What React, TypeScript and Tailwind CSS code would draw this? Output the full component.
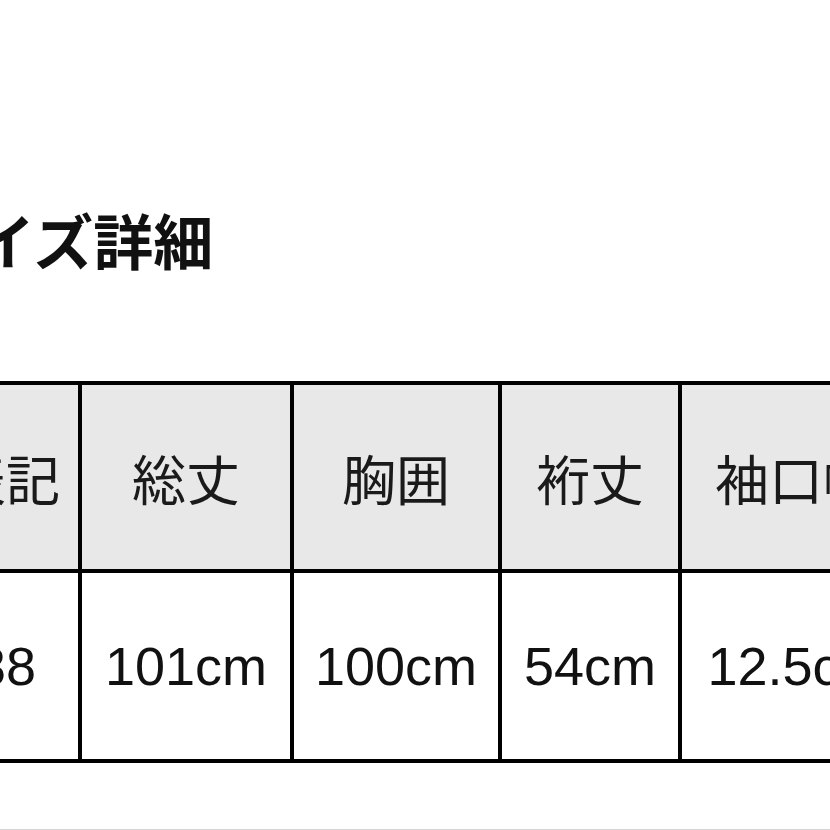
const headers = ['表記', '総丈', '胸囲', '裄丈', '袖口幅'];
const values = ['38', '101cm', '100cm', '54cm', '12.5cm'];
const widths = ['w-[152px]', 'w-[212px]', 'w-[208px]', 'w-[180px]', 'w-[232px]'];

const jp = { fontFamily: '"Noto Sans CJK JP", "Noto Sans", sans-serif' };
const latin = { fontFamily: '"Liberation Sans", Arial, sans-serif' };

export default function App() {
  return (
    <div className="w-[830px] h-[830px] overflow-hidden bg-white flex flex-col">
      <h1
        className="mt-[209px] -ml-[85px] text-[60px] leading-none font-bold text-[#111] whitespace-nowrap"
        style={jp}
      >
        サイズ詳細
      </h1>

      {/* size table, cut off at both sides like the photo */}
      <div className="mt-[112px] -ml-[70px] flex flex-col border-t-4 border-black w-max">
        <div className="flex">
          {headers.map((h, i) => (
            <div
              key={h}
              className={`${widths[i]} h-[188px] shrink-0 flex items-center justify-center bg-[#e8e8e8] border-r-4 border-b-4 border-black text-[54px] text-[#1a1a1a] whitespace-nowrap ${i === 0 ? 'border-l-4' : ''}`}
              style={jp}
            >
              {h}
            </div>
          ))}
        </div>
        <div className="flex">
          {values.map((v, i) => (
            <div
              key={v}
              className={`${widths[i]} h-[190px] shrink-0 flex items-center justify-center bg-white border-r-4 border-b-4 border-black text-[54px] text-[#111] whitespace-nowrap ${i === 0 ? 'border-l-4' : ''}`}
              style={latin}
            >
              {v}
            </div>
          ))}
        </div>
      </div>

      <div className="flex-1" />
      <div className="h-px bg-[#d6d6d6]" />
    </div>
  );
}
